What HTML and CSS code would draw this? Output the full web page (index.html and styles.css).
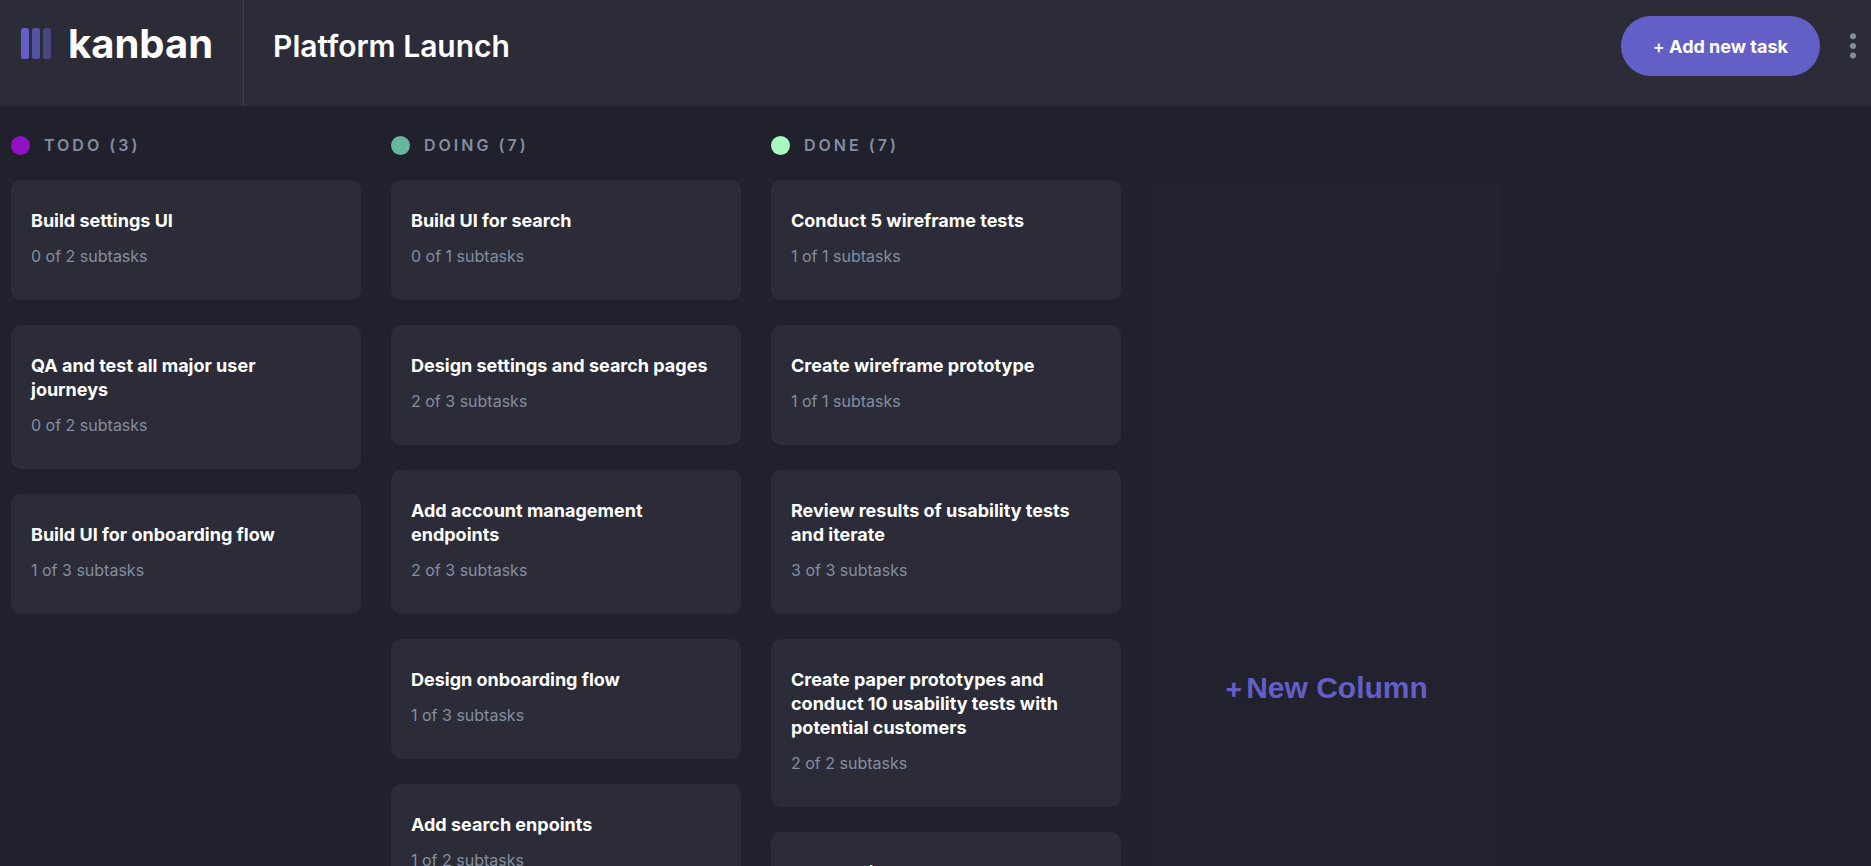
FILE: index.html
```html
<!DOCTYPE html>
<html lang="en">
<head>
<meta charset="utf-8">
<title>Kanban</title>
<link rel="stylesheet" href="styles.css">
</head>
<body>
<header class="topbar">
  <div class="brand">
    <svg class="brand-mark" width="30" height="31" viewBox="0 0 30 31" aria-hidden="true">
      <g fill="#635fc7">
        <rect x="0" y="0" width="8" height="31" rx="2.500"/>
        <rect x="11" y="0" width="8" height="31" rx="2.500" opacity="0.75"/>
        <rect x="22" y="0" width="8" height="31" rx="2.500" opacity="0.5"/>
      </g>
    </svg>
    <span class="brand-name">kanban</span>
  </div>
  <h1 class="board-title">Platform Launch</h1>
  <div class="actions">
    <button class="add-task" type="button"><span class="plus">+</span> Add new task</button>
    <button class="menu" type="button" aria-label="Board options">
      <svg width="6" height="26" viewBox="0 0 6 26" fill="#828fa3" aria-hidden="true"><circle cx="3" cy="3.300" r="3"/><circle cx="3" cy="13" r="3"/><circle cx="3" cy="22.600" r="3"/></svg>
    </button>
  </div>
</header>
<main class="board">
  <section class="column">
    <h2 class="column-title"><span class="dot todo"></span>TODO (3)</h2>
    <article class="card"><h3>Build settings UI</h3><p>0 of 2 subtasks</p></article>
    <article class="card"><h3>QA and test all major user journeys</h3><p>0 of 2 subtasks</p></article>
    <article class="card"><h3>Build UI for onboarding flow</h3><p>1 of 3 subtasks</p></article>
  </section>
  <section class="column">
    <h2 class="column-title"><span class="dot doing"></span>DOING (7)</h2>
    <article class="card"><h3>Build UI for search</h3><p>0 of 1 subtasks</p></article>
    <article class="card"><h3>Design settings and search pages</h3><p>2 of 3 subtasks</p></article>
    <article class="card"><h3>Add account management endpoints</h3><p>2 of 3 subtasks</p></article>
    <article class="card"><h3>Design onboarding flow</h3><p>1 of 3 subtasks</p></article>
    <article class="card"><h3>Add search enpoints</h3><p>1 of 2 subtasks</p></article>
  </section>
  <section class="column">
    <h2 class="column-title"><span class="dot done"></span>DONE (7)</h2>
    <article class="card"><h3>Conduct 5 wireframe tests</h3><p>1 of 1 subtasks</p></article>
    <article class="card"><h3>Create wireframe prototype</h3><p>1 of 1 subtasks</p></article>
    <article class="card"><h3>Review results of usability tests and iterate</h3><p>3 of 3 subtasks</p></article>
    <article class="card"><h3>Create paper prototypes and conduct 10 usability tests with potential customers</h3><p>2 of 2 subtasks</p></article>
    <article class="card"><h3>Market discovery</h3></article>
  </section>
  <button class="new-column" type="button"><span class="new-plus">+</span>New Column</button>
</main>
</body>
</html>
```
FILE: styles.css
```css
* { box-sizing: border-box; }

body {
  margin: 0;
  height: 100vh;
  display: flex;
  flex-direction: column;
  overflow: hidden;
  background: #21212d;
  color: #fff;
  font-family: Inter, "Liberation Sans", sans-serif;
}

h1, h2, h3, p { margin: 0; }

button {
  border: 0;
  background: none;
  font-family: inherit;
  cursor: pointer;
}

.topbar {
  flex: none;
  display: flex;
  align-items: stretch;
  height: 106px;
  background: #2b2c37;
}

.brand {
  display: flex;
  align-items: flex-start;
  gap: 17px;
  padding: 28px 30px 0 21px;
  border-right: 1px solid #3e3f4e;
}

.brand-mark { flex: none; }

.brand-name {
  font-size: 40px;
  font-weight: 700;
  line-height: 32px;
}

.board-title {
  padding: 26px 0 0 29px;
  font-size: 30px;
  font-weight: 600;
  line-height: 40px;
}

.actions {
  display: flex;
  align-items: center;
  gap: 30px;
  height: 60px;
  margin: 16px 15px 0 auto;
}

.add-task {
  height: 60px;
  padding: 0 32px;
  border-radius: 30px;
  background: #635fc7;
  color: #fff;
  font-size: 18px;
  font-weight: 700;
}

.plus { font-weight: 500; }

.menu { display: flex; padding: 0; }

.board {
  flex: 1;
  min-height: 0;
  display: flex;
  align-items: flex-start;
  gap: 30px;
  padding: 30px 11px 0;
  overflow: hidden;
}

.column {
  flex: none;
  display: flex;
  flex-direction: column;
  gap: 25px;
  width: 350px;
}

.column-title {
  display: flex;
  align-items: center;
  gap: 14px;
  color: #828fa3;
  font-size: 16px;
  font-weight: 600;
  line-height: 19px;
  letter-spacing: 3px;
}

.dot {
  width: 19px;
  height: 19px;
  border-radius: 50%;
}

.todo { background: #9112c6; }
.doing { background: #67b79e; }
.done { background: #a8f9bd; }

.card {
  padding: 29px 26px 32px 20px;
  border-radius: 10px;
  background: #2b2c37;
}

.card h3 {
  font-size: 18px;
  font-weight: 700;
  line-height: 24px;
}

.card p {
  margin-top: 11px;
  color: #828fa3;
  font-size: 16px;
  line-height: 24px;
}

.new-column {
  flex: none;
  display: flex;
  align-items: center;
  justify-content: center;
  gap: 3px;
  width: 350px;
  min-height: 1016px;
  margin-top: 44px;
  border-radius: 10px;
  background: linear-gradient(180deg, #2b2c3720, #2b2c3710);
  color: #635fc7;
  font: 700 30px/36px "Liberation Sans", Arial, sans-serif;
}

.new-plus { font-family: Inter, sans-serif; font-size: 28px; }
```
